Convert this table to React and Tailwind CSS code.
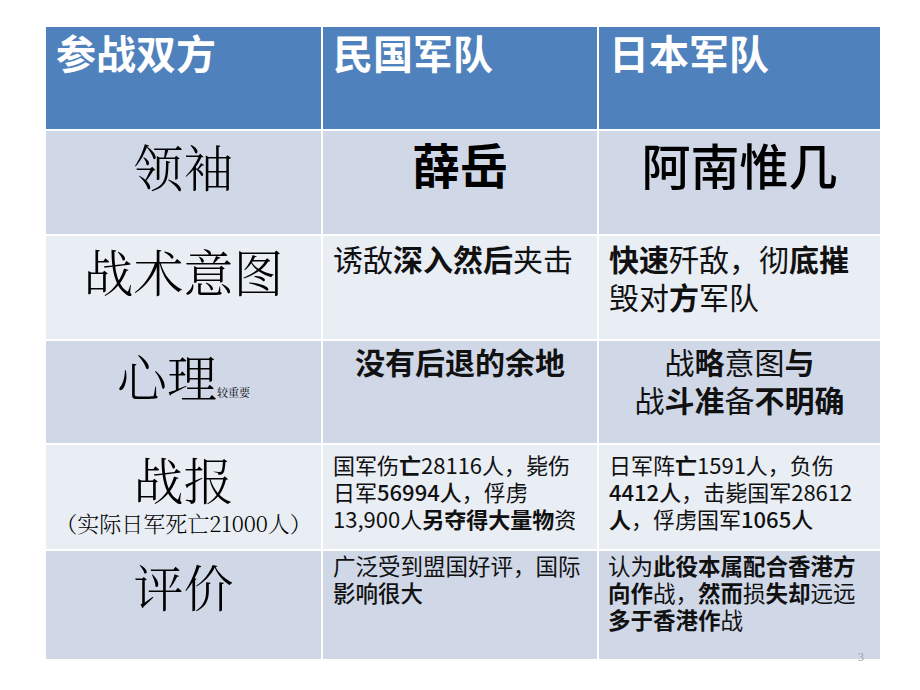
import React from "react";

const sans = "font-['Noto_Sans_CJK_SC','Microsoft_YaHei',sans-serif]";
const serif = "font-['Noto_Serif_CJK_SC','AR_PL_UMing_CN','Noto_Sans_CJK_SC',serif]";

function B({ children }) {
  return <span className="font-bold">{children}</span>;
}

function Label({ children, sub, tight }) {
  return (
    <div
      className={`${serif} font-light text-[50px] ${tight ? "leading-[1.1] pt-[6px]" : "leading-[1.2] pt-[4px]"} text-black text-center`}
    >
      {children}
      {sub}
    </div>
  );
}

export default function App() {
  const dark = "bg-[#d0d8e8]";
  const light = "bg-[#e9edf4]";

  return (
    <div className="w-[920px] h-[690px] bg-white overflow-hidden">
      <div className="ml-[46px] pt-[27px] w-[834px]">
        <div className="grid grid-cols-[275px_274px_281px] grid-rows-[102px_103px_103px_102px_104px_108px] gap-[2px]">
          {/* 表头 */}
          {["参战双方", "民国军队", "日本军队"].map((t) => (
            <div key={t} className={`bg-[#4f81bd] ${sans} font-bold text-white text-[40px] leading-[1.2] pl-[10px] pt-[1px]`}>
              {t}
            </div>
          ))}

          {/* 领袖 */}
          <div className={dark}>
            <Label>领袖</Label>
          </div>
          <div className={`${dark} ${sans} font-bold text-[48px] leading-[1.2] text-black text-center pt-[4px]`}>
            薛岳
          </div>
          <div className={`${dark} ${sans} font-medium text-[49px] leading-[1.2] text-black text-center pt-[4px]`}>
            阿南惟几
          </div>

          {/* 战术意图 */}
          <div className={light}>
            <Label>战术意图</Label>
          </div>
          <div className={`${light} ${sans} text-[30px] leading-[38px] text-[#111] pl-[10px] pt-[3px]`}>
            诱敌<B>深入然后</B>夹击
          </div>
          <div className={`${light} ${sans} text-[30px] leading-[38px] text-[#111] pl-[10px] pt-[3px]`}>
            <B>快速</B>歼敌，彻<B>底摧</B>
            <br />
            毁对<B>方</B>军队
          </div>

          {/* 心理 */}
          <div className={dark}>
            <Label sub={<span className="text-[11px] font-normal">较重要</span>}>心理</Label>
          </div>
          <div className={`${dark} ${sans} font-bold text-[30px] leading-[38px] text-[#111] text-center pt-[1px]`}>
            没有后退的余地
          </div>
          <div className={`${dark} ${sans} text-[30px] leading-[38px] text-[#111] text-center pt-[1px]`}>
            战<B>略</B>意图<B>与</B>
            <br />
            战<B>斗准</B>备<B>不明确</B>
          </div>

          {/* 战报 */}
          <div className={`${light} flex flex-col items-center`}>
            <Label tight>战报</Label>
            <div className={`${serif} font-light text-[22px] leading-[1.2] text-black mt-[4px]`}>
              （实际日军死亡21000人）
            </div>
          </div>
          <div className={`${light} ${sans} text-[22px] leading-[27px] text-[#111] pl-[10px] pt-[6px] whitespace-nowrap`}>
            国军伤<B>亡</B>28116人，毙伤
            <br />
            日军<span className="font-medium">56994人</span>，俘虏
            <br />
            13,900人<B>另夺得大量物</B>资
          </div>
          <div className={`${light} ${sans} text-[22px] leading-[27px] text-[#111] pl-[10px] pt-[6px] whitespace-nowrap`}>
            日军阵<B>亡</B>1591人，负伤
            <br />
            <span className="font-medium">4412人</span>，击毙国军28612
            <br />
            <B>人</B>，俘虏国军<span className="font-medium">1065人</span>
          </div>

          {/* 评价 */}
          <div className={dark}>
            <Label>评价</Label>
          </div>
          <div className={`${dark} ${sans} text-[22.5px] leading-[27px] text-[#111] pl-[10px] pt-[1px] whitespace-nowrap`}>
            广泛受到盟国好评，国际
            <br />
            <span className="font-medium">影响很大</span>
          </div>
          <div className={`${dark} ${sans} text-[22.5px] leading-[27px] text-[#111] pl-[9px] pt-[1px] whitespace-nowrap`}>
            认为<B>此役本属配合香港方</B>
            <br />
            <B>向作</B>战，<B>然而</B>损<B>失却</B>远远
            <br />
            <B>多于香港作</B>战
          </div>
        </div>
        <div className="flex justify-end pr-[16px] -mt-[8px]">
          <span className="font-['Liberation_Serif',serif] text-[12px] leading-none text-[#a0a0a0]">3</span>
        </div>
      </div>
    </div>
  );
}
